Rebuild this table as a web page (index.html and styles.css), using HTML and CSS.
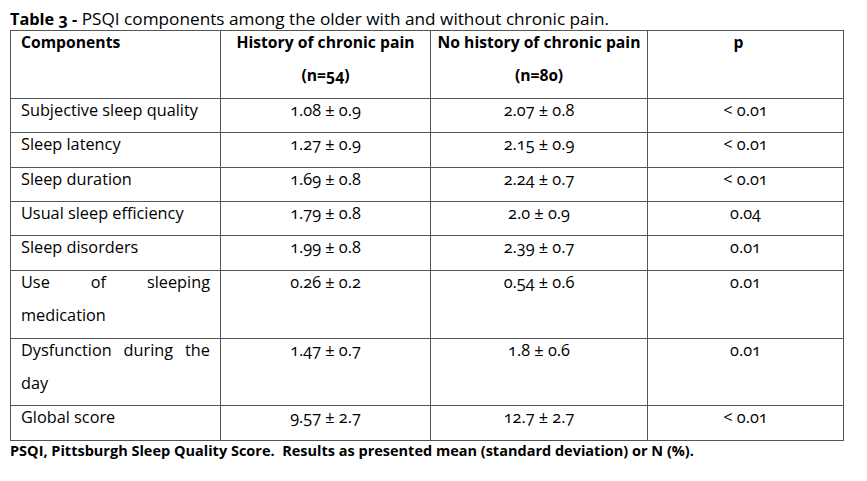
FILE: index.html
```html
<!DOCTYPE html>
<html>
<head>
<meta charset="utf-8">
<link rel="stylesheet" href="styles.css">
</head>
<body>
<div class="page">
  <p class="title"><b>Table 3 -</b> PSQI components among the older with and without chronic pain.</p>
  <table class="tbl">
    <colgroup>
      <col class="w1"><col class="w2"><col class="w3"><col class="w4">
    </colgroup>
    <thead>
      <tr>
        <th class="left"><div class="c">Components</div></th>
        <th><div class="c">History of chronic pain<br>(n=54)</div></th>
        <th><div class="c">No history of chronic pain<br>(n=80)</div></th>
        <th class="pcol"><div class="c">p</div></th>
      </tr>
    </thead>
    <tbody>
      <tr><td class="left"><div class="c">Subjective sleep quality</div></td><td><div class="c">1.08 ± 0.9</div></td><td><div class="c">2.07 ± 0.8</div></td><td><div class="c">&lt; 0.01</div></td></tr>
      <tr><td class="left"><div class="c">Sleep latency</div></td><td><div class="c">1.27 ± 0.9</div></td><td><div class="c">2.15 ± 0.9</div></td><td><div class="c">&lt; 0.01</div></td></tr>
      <tr><td class="left"><div class="c">Sleep duration</div></td><td><div class="c">1.69 ± 0.8</div></td><td><div class="c">2.24 ± 0.7</div></td><td><div class="c">&lt; 0.01</div></td></tr>
      <tr><td class="left"><div class="c">Usual sleep efficiency</div></td><td><div class="c">1.79 ± 0.8</div></td><td><div class="c">2.0 ± 0.9</div></td><td><div class="c">0.04</div></td></tr>
      <tr><td class="left"><div class="c">Sleep disorders</div></td><td><div class="c">1.99 ± 0.8</div></td><td><div class="c">2.39 ± 0.7</div></td><td><div class="c">0.01</div></td></tr>
      <tr><td class="left"><div class="c">Use of sleeping medication</div></td><td><div class="c">0.26 ± 0.2</div></td><td><div class="c">0.54 ± 0.6</div></td><td><div class="c">0.01</div></td></tr>
      <tr><td class="left"><div class="c">Dysfunction during the day</div></td><td><div class="c">1.47 ± 0.7</div></td><td><div class="c">1.8 ± 0.6</div></td><td><div class="c">0.01</div></td></tr>
      <tr><td class="left"><div class="c">Global score</div></td><td><div class="c">9.57 ± 2.7</div></td><td><div class="c">12.7 ± 2.7</div></td><td><div class="c">&lt; 0.01</div></td></tr>
    </tbody>
  </table>
  <p class="foot">PSQI, Pittsburgh Sleep Quality Score.&nbsp; Results as presented mean (standard deviation) or N (%).</p>
</div>
</body>
</html>
```
FILE: styles.css
```css
html, body {
  margin: 0;
  padding: 0;
  background: #ffffff;
}
body {
  font-family: "Open Sans", "Noto Sans", sans-serif;
  font-size: 16.3px;
  color: #000;
  font-variant-numeric: oldstyle-nums;
}
.page {
  padding: 8px 0 0 10px;
}
.title {
  margin: 0;
  font-size: 17.2px;
  line-height: 22px;
  height: 22px;
  white-space: nowrap;
}
.title b {
  font-size: 16.3px;
}
.tbl {
  border-collapse: collapse;
  table-layout: fixed;
  width: 833px;
}
.w1 { width: 210px; }
.w2 { width: 210px; }
.w3 { width: 217px; }
.w4 { width: 196px; }
.tbl th, .tbl td {
  border: 1px solid #555;
  padding: 0 10px;
  vertical-align: top;
  text-align: center;
  line-height: 33.4px;
  font-weight: normal;
}
.tbl th {
  font-weight: bold;
  font-size: 15.7px;
  padding: 0 4px;
  white-space: nowrap;
}
.tbl th.left {
  padding-left: 10px;
}
.tbl .pcol {
  padding-right: 18px;
}
.tbl .left {
  text-align: justify;
}
.c {
  margin: -5px 0 5px;
}
.foot {
  margin: 0;
  font-size: 14.5px;
  line-height: 20px;
  font-weight: bold;
  white-space: nowrap;
}
```
